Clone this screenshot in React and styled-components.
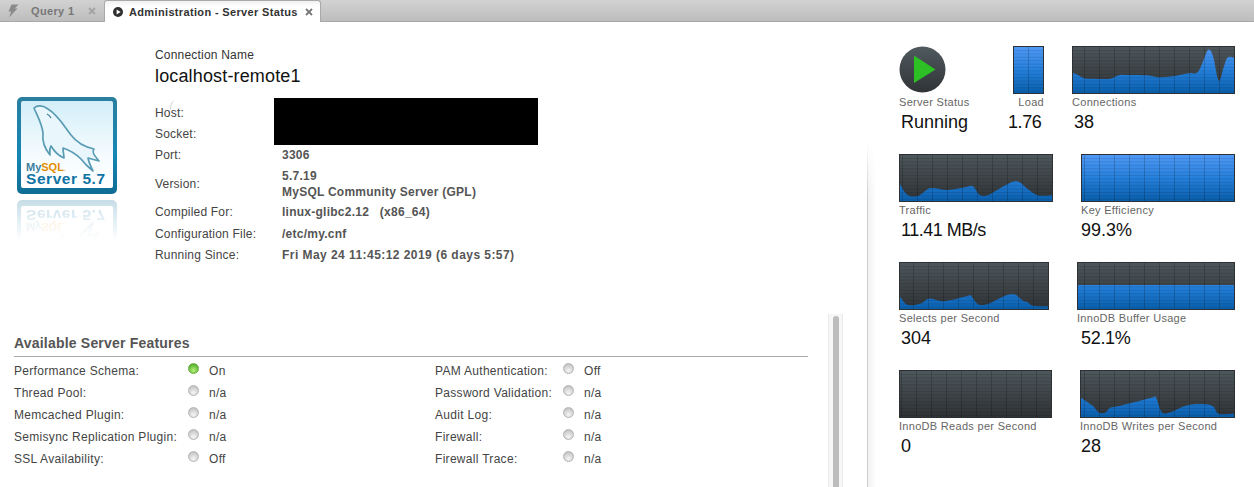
import React from "react";
import styled, { createGlobalStyle } from "styled-components";

const GlobalStyle = createGlobalStyle`
    html, body { margin: 0; padding: 0; background: #fff; }
    body { font-family: "Liberation Sans", Arial, sans-serif; color: #333; }
`;

const SANS = `"Liberation Sans", Arial, sans-serif`;

// chart data: [x fraction, height fraction]
const CONNECTIONS = [[0, .44], [.03, .39], [.07, .32], [.13, .31], [.23, .31], [.29, .39], [.35, .39], [.47, .38], [.53, .34], [.63, .37], [.72, .43], [.77, .44], [.8, .62], [.84, .94], [.87, .8], [.905, .27], [.935, .55], [.96, .77], [1, .77]];
const TRAFFIC = [[0, .37], [.05, .13], [.125, .12], [.2, .28], [.31, .24], [.43, .3], [.48, .32], [.525, .13], [.58, .13], [.67, .3], [.745, .42], [.79, .4], [.84, .26], [.91, .12], [1, .13]];
const SELECTS = [[0, .27], [.05, .09], [.14, .12], [.2, .23], [.3, .17], [.45, .275], [.48, .29], [.53, .1], [.6, .12], [.71, .29], [.78, .31], [.83, .18], [.86, .15], [.9, .07], [1, .06]];
const WRITES = [[0, .42], [.065, .27], [.085, .22], [.12, .09], [.16, .1], [.19, .2], [.25, .24], [.32, .3], [.36, .33], [.47, .43], [.49, .43], [.53, .1], [.59, .11], [.68, .24], [.77, .28], [.86, .24], [.9, .07], [1, .07]];

const FEATURES_LEFT = [
    { name: "Performance Schema:", value: "On", on: true },
    { name: "Thread Pool:", value: "n/a" },
    { name: "Memcached Plugin:", value: "n/a" },
    { name: "Semisync Replication Plugin:", value: "n/a" },
    { name: "SSL Availability:", value: "Off" },
];
const FEATURES_RIGHT = [
    { name: "PAM Authentication:", value: "Off" },
    { name: "Password Validation:", value: "n/a" },
    { name: "Audit Log:", value: "n/a" },
    { name: "Firewall:", value: "n/a" },
    { name: "Firewall Trace:", value: "n/a" },
];

function smoothPath(points, w, h) {
    const pts = points.map(([x, y]) => [x * w, h - y * h]);
    let d = `M0 ${h} L${pts[0][0]} ${pts[0][1]}`;
    for (let i = 0; i < pts.length - 1; i++) {
        const p0 = pts[i - 1] || pts[i];
        const p1 = pts[i];
        const p2 = pts[i + 1];
        const p3 = pts[i + 2] || p2;
        const c1 = [p1[0] + (p2[0] - p0[0]) / 6, p1[1] + (p2[1] - p0[1]) / 6];
        const c2 = [p2[0] - (p3[0] - p1[0]) / 6, p2[1] - (p3[1] - p1[1]) / 6];
        d += ` C${c1[0]} ${c1[1]} ${c2[0]} ${c2[1]} ${p2[0]} ${p2[1]}`;
    }
    return d + ` L${w} ${h} Z`;
}

function Chart({ id, width, height = 46, data, level }) {
    const path = data
        ? smoothPath(data, width, height)
        : `M0 ${height - (level || 0) * height} H${width} V${height} H0 Z`;
    const rows = [];
    for (let y = 3.5; y < height; y += 3.4) rows.push(y);
    const cols = [];
    for (let x = width - 15; x > 0; x -= 15) cols.push(Math.round(x) + 0.5);
    return (
        <ChartSvg width={width + 2} height={height + 2} viewBox={`-1 -1 ${width + 2} ${height + 2}`}>
            <defs>
                <linearGradient id={`bg-${id}`} x1="0" y1="0" x2="0" y2="1">
                    <stop offset="0" stopColor="#4d575c" />
                    <stop offset="1" stopColor="#2f3235" />
                </linearGradient>
                <linearGradient id={`fill-${id}`} gradientUnits="userSpaceOnUse" x1="0" y1="0" x2="0" y2={height}>
                    <stop offset="0" stopColor="#4f99f5" />
                    <stop offset="0.5" stopColor="#2580dc" />
                    <stop offset="1" stopColor="#0a5fac" />
                </linearGradient>
            </defs>
            <rect x="-0.5" y="-0.5" width={width + 1} height={height + 1} fill={`url(#bg-${id})`} stroke="#2d3134" />
            <path d={path} fill={`url(#fill-${id})`} />
            {rows.map((y) => <line key={y} x1="0" x2={width} y1={y} y2={y} stroke="#000" strokeOpacity="0.1" />)}
            {cols.map((x) => <line key={x} x1={x} x2={x} y1="0" y2={height} stroke="#000" strokeOpacity="0.18" />)}
        </ChartSvg>
    );
}

function LogoArt({ id }) {
    return (
        <svg width="100" height="98" viewBox="0 0 100 98">
            <defs>
                <linearGradient id={`frame-${id}`} x1="0" y1="0" x2="0" y2="1">
                    <stop offset="0" stopColor="#2a7f9f" />
                    <stop offset="0.6" stopColor="#1586b4" />
                    <stop offset="1" stopColor="#0f6d94" />
                </linearGradient>
                <linearGradient id={`panel-${id}`} x1="0" y1="0" x2="0" y2="1">
                    <stop offset="0" stopColor="#d3eef9" />
                    <stop offset="0.6" stopColor="#f4fbfe" />
                    <stop offset="1" stopColor="#ffffff" />
                </linearGradient>
            </defs>
            <rect x="0" y="0" width="100" height="97" rx="5" fill={`url(#frame-${id})`} />
            <rect x="4" y="4" width="92" height="87" rx="2" fill={`url(#panel-${id})`} />
            <path
                d="M17 11 C20 8 26 8 31 12 C41 18 47 29 54 38 C60 46 68 50 77 52 C75 55 76 57 82 64 C78 63 74 62 71 61 C72 66 74 70 76 74 C71 70 67 66 64 62 C59 57 52 53 46 51 C46 55 47 58 47 61 C42 59 37 54 34 49 C32 52 33 55 33 58 C28 52 25 44 26 36 C25 27 20 18 17 11 Z"
                fill="#e9f6fb"
                stroke="#5b9cb5"
                strokeWidth="1.7"
                strokeLinejoin="round"
            />
            <path d="M30 17 C32 18 33 19 34 21" fill="none" stroke="#3f7f99" strokeWidth="1.2" />
            <LogoBrand x="9" y="74">My<tspan fill="#e48e00">SQL</tspan><tspan fontSize="5" fill="#e48e00">.</tspan></LogoBrand>
            <LogoServer x="9" y="87">Server 5.7</LogoServer>
        </svg>
    );
}

function BoltIcon() {
    return (
        <svg width="11" height="14" viewBox="0 0 11 14">
            <path d="M3.5 0.5 L10.5 0.5 L6.8 4.5 L9.5 4.5 L1 13.5 L3.2 7.5 L0.5 7.5 Z" fill="#8a8a8a" />
        </svg>
    );
}

function PlayIcon() {
    return (
        <svg width="10" height="10" viewBox="0 0 10 10">
            <circle cx="5" cy="5" r="5" fill="#2f2f2f" />
            <path d="M3.6 2.4 L7.6 5 L3.6 7.6 Z" fill="#fff" />
        </svg>
    );
}

function CloseIcon({ active }) {
    return (
        <CloseSvg width="8" height="8" viewBox="0 0 8 8">
            <path d="M1 1 L7 7 M7 1 L1 7" stroke={active ? "#777" : "#a3a3a3"} strokeWidth="1.8" />
        </CloseSvg>
    );
}

function RunIcon() {
    return (
        <svg width="47" height="47" viewBox="0 0 47 47">
            <defs>
                <linearGradient id="run-bg" x1="0" y1="0" x2="0" y2="1">
                    <stop offset="0" stopColor="#505a5f" />
                    <stop offset="1" stopColor="#303336" />
                </linearGradient>
            </defs>
            <circle cx="23.5" cy="23.5" r="23" fill="url(#run-bg)" />
            <path d="M15 9.5 L36.5 23.5 L15 37 Z" fill="#2cc024" />
        </svg>
    );
}

function FeatureRow({ name, value, on, nameWidth }) {
    return (
        <Feature>
            <FeatureName $width={nameWidth}>{name}</FeatureName>
            <Dot $on={on} />
            <FeatureValue>{value}</FeatureValue>
        </Feature>
    );
}

function Gauge({ label, value, indent, align, spacing, children, width }) {
    return (
        <GaugeBox $width={width}>
            <GaugeArt>{children}</GaugeArt>
            <GaugeLabel $align={align}>{label}</GaugeLabel>
            <GaugeValue $indent={indent} $spacing={spacing}>{value}</GaugeValue>
        </GaugeBox>
    );
}

export default function App() {
    return (
        <Page>
            <GlobalStyle />
            <TabBar>
                <Tab>
                    <TabIcon $width={23}><BoltIcon /></TabIcon>
                    <TabTitle>Query 1</TabTitle>
                    <CloseIcon />
                </Tab>
                <ActiveTab>
                    <TabIcon $width={16}><PlayIcon /></TabIcon>
                    <TabTitle $active>Administration - Server Status</TabTitle>
                    <CloseIcon active />
                </ActiveTab>
            </TabBar>

            <Body>
                <LeftPanel>
                    <LeftContent>
                        <Summary>
                            <LogoColumn>
                                <LogoArt id="main" />
                                <Reflection aria-hidden="true"><LogoArt id="mirror" /></Reflection>
                            </LogoColumn>
                            <InfoColumn>
                                <ConnectionLabel>Connection Name</ConnectionLabel>
                                <ConnectionName>localhost-remote1</ConnectionName>
                                <InfoGrid>
                                    <InfoLabel>
                                        Host:
                                        <Tick width="4" height="8" viewBox="0 0 4 8"><path d="M0.5 8 C0.5 4 1.5 1.5 3.5 0.5" fill="none" stroke="#cfcfcf" /></Tick>
                                    </InfoLabel>
                                    <Redacted />
                                    <InfoLabel>Socket:</InfoLabel>
                                    <InfoLabel>Port:</InfoLabel>
                                    <InfoValue>3306</InfoValue>
                                    <InfoLabel>Version:</InfoLabel>
                                    <InfoValue>5.7.19<br />MySQL Community Server (GPL)</InfoValue>
                                    <InfoLabel>Compiled For:</InfoLabel>
                                    <InfoValue>linux-glibc2.12&nbsp;&nbsp;&nbsp;(x86_64)</InfoValue>
                                    <InfoLabel>Configuration File:</InfoLabel>
                                    <InfoValue>/etc/my.cnf</InfoValue>
                                    <InfoLabel>Running Since:</InfoLabel>
                                    <InfoValue $spacing={0.45}>Fri May 24 11:45:12 2019 (6 days 5:57)</InfoValue>
                                </InfoGrid>
                            </InfoColumn>
                        </Summary>

                        <FeaturesTitle>Available Server Features</FeaturesTitle>
                        <FeaturesGrid>
                            <FeatureColumn>
                                {FEATURES_LEFT.map((f) => <FeatureRow key={f.name} nameWidth={174} {...f} />)}
                            </FeatureColumn>
                            <FeatureColumn>
                                {FEATURES_RIGHT.map((f) => <FeatureRow key={f.name} nameWidth={128} {...f} />)}
                            </FeatureColumn>
                        </FeaturesGrid>
                    </LeftContent>
                    <ScrollTrack><ScrollThumb /></ScrollTrack>
                </LeftPanel>

                <Divider />

                <RightPanel>
                    <GaugeRow>
                        <Gauge label="Server Status" value="Running" indent={2} width={110}><RunIcon /></Gauge>
                        <LoadSlot>
                            <Gauge label="Load" value="1.76" indent={-5} spacing={-0.4} align="right" width={31}><Chart id="load" width={29} level={1} /></Gauge>
                        </LoadSlot>
                        <Gauge label="Connections" value="38" indent={2} width={163}><Chart id="conn" width={161} data={CONNECTIONS} /></Gauge>
                    </GaugeRow>
                    <GaugeRow>
                        <Gauge label="Traffic" value="11.41 MB/s" indent={2} spacing={-0.5} width={154}><Chart id="traffic" width={152} data={TRAFFIC} /></Gauge>
                        <Gauge label="Key Efficiency" value="99.3%" width={154}><Chart id="key" width={152} level={1} /></Gauge>
                    </GaugeRow>
                    <GaugeRow>
                        <Gauge label="Selects per Second" value="304" indent={2} width={150}><Chart id="selects" width={148} data={SELECTS} /></Gauge>
                        <Gauge label="InnoDB Buffer Usage" value="52.1%" indent={4} spacing={-0.3} width={158}><Chart id="buffer" width={156} level={0.52} /></Gauge>
                    </GaugeRow>
                    <GaugeRow>
                        <Gauge label="InnoDB Reads per Second" value="0" indent={2} width={153}><Chart id="reads" width={151} level={0} /></Gauge>
                        <Gauge label="InnoDB Writes per Second" value="28" indent={1} width={155}><Chart id="writes" width={153} data={WRITES} /></Gauge>
                    </GaugeRow>
                </RightPanel>
            </Body>
        </Page>
    );
}

const Page = styled.div`
    width: 1254px;
    height: 487px;
    overflow: hidden;
    display: flex;
    flex-direction: column;
    background: #fff;
`;

const TabBar = styled.div`
    height: 22px;
    flex: none;
    display: flex;
    box-sizing: border-box;
    border-bottom: 1px solid #a9a9a9;
    background: linear-gradient(#d2d2d2, #bdbdbd);
`;

const Tab = styled.div`
    width: 103px;
    height: 21px;
    box-sizing: border-box;
    padding-left: 8px;
    display: flex;
    align-items: center;
    position: relative;
`;

const ActiveTab = styled(Tab)`
    width: 217px;
    height: 22px;
    margin-left: 1px;
    background: linear-gradient(#f1f1f1, #fff 6px);
    border: 1px solid #a9a9a9;
    border-bottom: 0;
    border-radius: 3px 3px 0 0;
`;

const TabIcon = styled.span`
    width: ${(p) => p.$width}px;
    flex: none;
    display: flex;
    align-items: center;
`;

const TabTitle = styled.span`
    font: bold 11px ${SANS};
    letter-spacing: 0.35px;
    color: ${(p) => (p.$active ? "#333" : "#777")};
    white-space: nowrap;
`;

const CloseSvg = styled.svg`
    margin-left: auto;
    margin-right: 7px;
`;

const Body = styled.div`
    flex: 1;
    min-height: 0;
    display: flex;
`;

const LeftPanel = styled.div`
    width: 867px;
    flex: none;
    display: flex;
`;

const LeftContent = styled.div`
    width: 828px;
    flex: none;
    box-sizing: border-box;
    padding: 0 20px 0 14px;
`;

const Summary = styled.div`
    height: 311px;
    display: flex;
`;

const LogoColumn = styled.div`
    width: 141px;
    flex: none;
    padding: 75px 0 0 3px;
    box-sizing: border-box;
`;

const Reflection = styled.div`
    height: 42px;
    overflow: hidden;
    transform: scaleY(-1);
    display: flex;
    align-items: flex-end;
    width: 100px;
    opacity: 0.24;
    mask-image: linear-gradient(to top, #000, transparent);
`;

const LogoBrand = styled.text`
    font: bold 11px ${SANS};
    fill: #3d7f9f;
`;

const LogoServer = styled.text`
    font: bold 15.5px ${SANS};
    letter-spacing: 0.55px;
    fill: #0f73a3;
`;

const InfoColumn = styled.div`
    flex: 1;
`;

const ConnectionLabel = styled.div`
    margin-top: 26px;
    font-size: 12px;
    line-height: 14px;
    letter-spacing: 0.2px;
    color: #333;
`;

const ConnectionName = styled.div`
    margin-top: 3px;
    font-size: 18px;
    line-height: 22px;
    letter-spacing: 0.15px;
    color: #111;
`;

const InfoGrid = styled.div`
    margin-top: 15px;
    display: grid;
    grid-template-columns: 127px 1fr;
    grid-template-rows: 21px 21px 22px 35px 22px 21px 22px;
    align-items: center;
`;

const InfoLabel = styled.div`
    font-size: 12px;
    letter-spacing: 0.2px;
    color: #444;
    position: relative;
`;

const Tick = styled.svg`
    position: absolute;
    left: 15px;
    top: -5px;
`;

const Redacted = styled.div`
    grid-row: span 2;
    align-self: stretch;
    width: 264px;
    margin: -4px 0 -1px -8px;
    background: #000;
`;

const InfoValue = styled.div`
    font: bold 12px/16px ${SANS};
    letter-spacing: ${(p) => p.$spacing || 0.25}px;
    color: #555;
`;

const FeaturesTitle = styled.div`
    height: 24px;
    line-height: 20px;
    box-sizing: border-box;
    border-bottom: 1px solid #aaa;
    font-weight: bold;
    font-size: 14px;
    letter-spacing: 0.2px;
    color: #555;
`;

const FeaturesGrid = styled.div`
    display: grid;
    grid-template-columns: 421px 1fr;
    padding-top: 3px;
`;

const FeatureColumn = styled.div`
    display: flex;
    flex-direction: column;
`;

const Feature = styled.div`
    height: 22px;
    display: flex;
    align-items: center;
    font-size: 12px;
    letter-spacing: 0.3px;
`;

const FeatureName = styled.span`
    width: ${(p) => p.$width}px;
    flex: none;
    color: #444;
    white-space: nowrap;
`;

const Dot = styled.span`
    width: 11px;
    height: 11px;
    flex: none;
    border-radius: 50%;
    margin: -5px 10px 0 0;
    background: ${(p) =>
        p.$on
            ? "radial-gradient(circle at 50% 70%, #b7ee7c, #58b52c 75%)"
            : "radial-gradient(circle at 50% 75%, #f6f6f6, #c4c4c4 80%)"};
    border: 1px solid ${(p) => (p.$on ? "#6dab45" : "#b5b5b5")};
    box-sizing: border-box;
`;

const FeatureValue = styled.span`
    color: #444;
`;

const ScrollTrack = styled.div`
    align-self: flex-end;
    width: 15px;
    height: 173px;
    box-sizing: border-box;
    padding: 2px 3px 0 4px;
    background: #f7f7f7;
    border-left: 1px solid #eaeaea;
    border-right: 1px solid #eaeaea;
`;

const ScrollThumb = styled.div`
    height: 100%;
    border-radius: 4px 4px 0 0;
    background: #bdbdbd;
`;

const Divider = styled.div`
    width: 1px;
    flex: none;
    position: relative;
    background: linear-gradient(transparent 120px, #cfcfcf 175px);

    &::after {
        content: "";
        position: absolute;
        top: 0;
        bottom: 0;
        left: 1px;
        width: 8px;
        background: linear-gradient(to right, #f1f1f1, #fff);
        mask-image: linear-gradient(transparent 120px, #000 175px);
    }
`;

const RightPanel = styled.div`
    flex: 1;
    box-sizing: border-box;
    padding: 24px 19px 0 31px;
    display: flex;
    flex-direction: column;
`;

const GaugeRow = styled.div`
    height: 108px;
    flex: none;
    display: flex;
    justify-content: space-between;
`;

const LoadSlot = styled.div`
    margin: 0 28px 0 4px;
`;

const GaugeBox = styled.div`
    width: ${(p) => p.$width}px;
    flex: none;
`;

const GaugeArt = styled.div`
    height: 48px;
    line-height: 0;
`;

const ChartSvg = styled.svg`
    display: block;
`;

const GaugeLabel = styled.div`
    font-size: 11px;
    line-height: 16px;
    letter-spacing: 0.3px;
    color: #666;
    white-space: nowrap;
    ${(p) => p.$align === "right" && "direction: rtl;"}
`;

const GaugeValue = styled.div`
    margin: 1px 0 0 ${(p) => p.$indent || 0}px;
    font-size: 18px;
    line-height: 22px;
    letter-spacing: ${(p) => p.$spacing || 0}px;
    color: #111;
    white-space: nowrap;
`;
